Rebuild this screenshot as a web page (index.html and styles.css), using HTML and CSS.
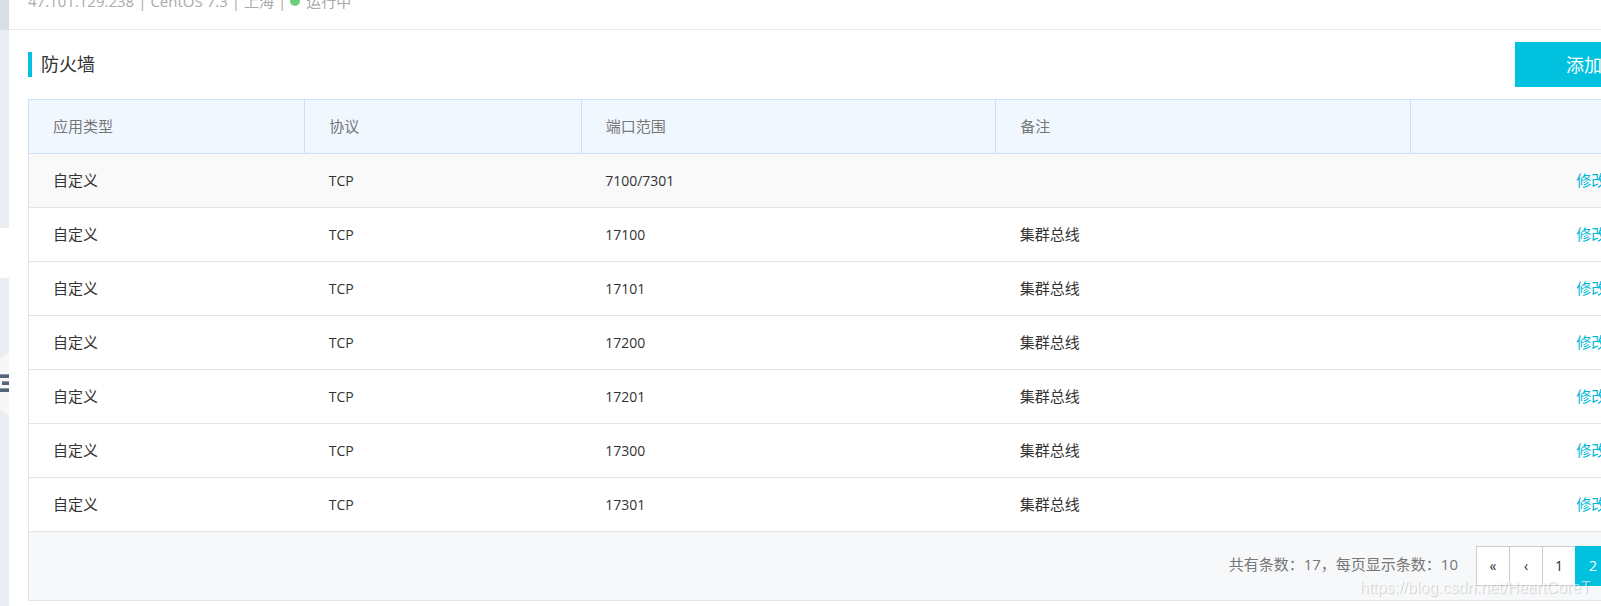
FILE: index.html
```html
<!DOCTYPE html>
<html lang="zh-CN">
<head>
<meta charset="utf-8">
<title>防火墙</title>
<link rel="stylesheet" href="styles.css">
</head>
<body>
<div class="shell">
  <aside class="rail">
    <div class="rail-head"></div>
    <div class="rail-group"></div>
    <div class="rail-active"></div>
    <div class="rail-rest">
      <button class="rail-toggle" type="button" aria-label="收起导航">
        <svg width="9" height="62" viewBox="0 0 9 62" aria-hidden="true">
          <path d="M0 6L9 0V62L0 56Z" fill="#f7f7f7"/>
          <path d="M0 21H9V25H0ZM2 28H9V32H2ZM0 35H9V39H0Z" fill="#546478"/>
          <path d="M0 21H9V22H0ZM2 28H9V29H2ZM0 35H9V36H0Z" fill="#8f98a3"/>
        </svg>
      </button>
    </div>
  </aside>
  <main class="main">
    <header class="server">
      <span>47.101.129.238</span><span>|</span><span>CentOS 7.3</span><span>|</span><span>上海</span><span>|</span>
      <span class="state"><i class="dot"></i>运行中</span>
    </header>
    <section class="panel">
      <div class="panel-head">
        <h1 class="title">防火墙</h1>
        <button class="add" type="button">添加</button>
      </div>
      <table class="rules">
        <colgroup><col class="narrow"><col class="narrow"><col class="wide"><col class="wide"><col class="narrow"></colgroup>
        <thead>
          <tr><th>应用类型</th><th>协议</th><th>端口范围</th><th>备注</th><th></th></tr>
        </thead>
        <tbody>
          <tr class="hover"><td>自定义</td><td class="latin">TCP</td><td class="latin">7100/7301</td><td></td><td class="action"><a href="#">修改</a></td></tr>
          <tr><td>自定义</td><td class="latin">TCP</td><td class="latin">17100</td><td>集群总线</td><td class="action"><a href="#">修改</a></td></tr>
          <tr><td>自定义</td><td class="latin">TCP</td><td class="latin">17101</td><td>集群总线</td><td class="action"><a href="#">修改</a></td></tr>
          <tr><td>自定义</td><td class="latin">TCP</td><td class="latin">17200</td><td>集群总线</td><td class="action"><a href="#">修改</a></td></tr>
          <tr><td>自定义</td><td class="latin">TCP</td><td class="latin">17201</td><td>集群总线</td><td class="action"><a href="#">修改</a></td></tr>
          <tr><td>自定义</td><td class="latin">TCP</td><td class="latin">17300</td><td>集群总线</td><td class="action"><a href="#">修改</a></td></tr>
          <tr><td>自定义</td><td class="latin">TCP</td><td class="latin">17301</td><td>集群总线</td><td class="action"><a href="#">修改</a></td></tr>
        </tbody>
      </table>
      <footer class="foot">
        <span class="count">共有条数：17，每页显示条数：10</span>
        <nav class="pager" aria-label="分页">
          <button type="button">«</button><button type="button">‹</button><button type="button">1</button><button class="current" type="button">2</button>
        </nav>
      </footer>
    </section>
  </main>
</div>
<div class="watermark">https://blog.csdn.net/HeartCoreT</div>
</body>
</html>
```
FILE: styles.css
```css
* { box-sizing: border-box; }
body {
  margin: 0;
  min-height: 100vh;
  overflow: hidden;
  background: #fff;
  color: #333;
  font: 15px/20px "Open Sans", "Noto Sans CJK SC", sans-serif;
}
button { font: inherit; border: 0; padding: 0; cursor: pointer; }

.shell {
  display: flex;
  width: calc(100% + 105px);
  min-height: 100vh;
}
.rail { display: flex; flex-direction: column; flex: 0 0 9px; }
.rail-head { height: 30px; background: #d9dee4; }
.rail-group { height: 198px; background: #eaedf1; }
.rail-active { height: 50px; background: #fff; }
.rail-rest { flex: 1; padding-top: 75px; background: #eaedf1; }
.rail-toggle { display: block; background: none; }
.rail-toggle svg { display: block; }

.main { flex: 1; min-width: 0; }
.server {
  display: flex;
  gap: 4px;
  margin-top: -9px;
  padding: 0 19px 18px;
  border-bottom: 1px solid #e8e8e8;
  color: #aaa;
}
.state { display: flex; align-items: center; gap: 6px; }
.dot { width: 10px; height: 10px; border-radius: 50%; background: #6fce7c; }

.panel { padding: 12px 19px 5px; }
.panel-head {
  display: flex;
  justify-content: space-between;
  align-items: center;
  margin-bottom: 12px;
}
.title {
  margin: 0;
  padding-left: 9px;
  border-left: 4px solid #00c1de;
  font-size: 18px;
  line-height: 25px;
  font-weight: 400;
}
.add {
  width: 172px;
  height: 45px;
  padding-left: 51px;
  background: #00c1de;
  color: #fff;
  font-size: 18px;
  text-align: left;
}

.rules { width: 100%; table-layout: fixed; border-collapse: collapse; }
.narrow { width: 20%; }
.wide { width: 30%; }
.rules th, .rules td { height: 54px; padding: 0 24px 2px; text-align: left; }
.rules th {
  border: 1px solid #c9e2fc;
  background: #f0f7ff;
  color: #777;
  font-weight: 400;
}
.rules td { border-bottom: 1px solid #e1e4e8; }
.rules td:first-child { border-left: 1px solid #e1e4e8; }
.rules td.latin { padding-bottom: 0; font-size: 14px; }
.rules .hover td { background: #f9f9f9; }
.rules td.action { padding-left: 166px; }
.action a { color: #00b7d3; text-decoration: none; }

.foot {
  display: flex;
  justify-content: flex-end;
  align-items: flex-start;
  gap: 18px;
  padding: 14px 76px 14px 0;
  border: 1px solid #dfe5ea;
  border-top: 0;
  background: #f6f8fa;
}
.count { line-height: 36px; color: #777; }
.pager { display: flex; }
.pager button {
  width: 33px;
  height: 40px;
  border: 1px solid #ccc;
  border-right: 0;
  background: #fff;
  color: #333;
  font-size: 14px;
}
.pager .current { width: 35px; border-color: #00c1de; background: #00c1de; color: #fff; }

.watermark {
  position: fixed;
  right: 10px;
  bottom: 8px;
  color: rgba(255, 255, 255, .6);
  font: 16px/20px "Liberation Sans", sans-serif;
  text-shadow: 1px 1px 1px rgba(0, 0, 0, .16);
  pointer-events: none;
}
```
